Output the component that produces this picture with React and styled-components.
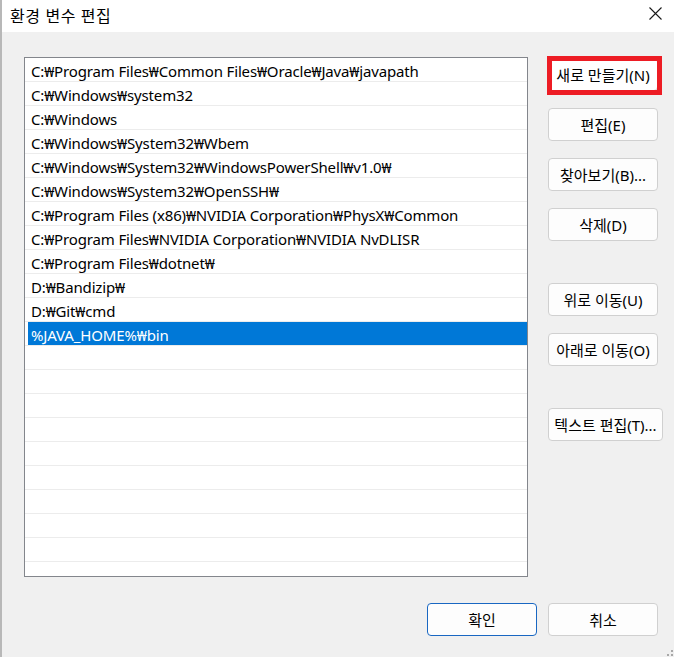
import React from "react";
import styled, {createGlobalStyle} from "styled-components";

const paths = [
    "C:₩Program Files₩Common Files₩Oracle₩Java₩javapath",
    "C:₩Windows₩system32",
    "C:₩Windows",
    "C:₩Windows₩System32₩Wbem",
    "C:₩Windows₩System32₩WindowsPowerShell₩v1.0₩",
    "C:₩Windows₩System32₩OpenSSH₩",
    "C:₩Program Files (x86)₩NVIDIA Corporation₩PhysX₩Common",
    "C:₩Program Files₩NVIDIA Corporation₩NVIDIA NvDLISR",
    "C:₩Program Files₩dotnet₩",
    "D:₩Bandizip₩",
    "D:₩Git₩cmd",
    "%JAVA_HOME%₩bin",
];

const TOTAL_ROWS = 21;
const SELECTED = 11;

const GlobalStyle = createGlobalStyle`
  html, body {
    margin: 0;
    padding: 0;
    background: #f0f0f0;
  }

  body {
    font-family: "Noto Sans", "Noto Sans CJK KR", sans-serif;
    font-size: 15px;
    color: #000;
  }
`;

export default function App() {
    const rows = Array.from({length: TOTAL_ROWS}, (_, i) => paths[i] || "");

    return <>
        <GlobalStyle/>
        <Window>
            <TitleBar>
                <Title>환경 변수 편집</Title>
                <CloseButton>
                    <svg width="13" height="13" viewBox="0 0 13 13">
                        <path d="M0.5 0.5 L12.5 12.5 M12.5 0.5 L0.5 12.5" stroke="#1a1a1a" strokeWidth="1.1"/>
                    </svg>
                </CloseButton>
            </TitleBar>

            <Body>
                <ListBox>
                    {rows.map((text, index) =>
                        <Row key={index}>
                            <RowLabel selected={index === SELECTED}>{text}</RowLabel>
                        </Row>
                    )}
                </ListBox>

                <SideColumn>
                    <Button highlighted>새로 만들기(N)</Button>
                    <Button>편집(E)</Button>
                    <Button>찾아보기(B)...</Button>
                    <Button>삭제(D)</Button>
                    <Button spaced>위로 이동(U)</Button>
                    <Button>아래로 이동(O)</Button>
                    <Button spaced wide>텍스트 편집(T)...</Button>
                </SideColumn>
            </Body>

            <Footer>
                <Button primary>확인</Button>
                <Button>취소</Button>
                <Grip>
                    <svg width="12" height="12" viewBox="0 0 12 12">
                        <rect x="9" y="1" width="2" height="2" fill="#a8a8a8"/>
                        <rect x="5" y="5" width="2" height="2" fill="#a8a8a8"/>
                        <rect x="9" y="5" width="2" height="2" fill="#a8a8a8"/>
                        <rect x="1" y="9" width="2" height="2" fill="#a8a8a8"/>
                        <rect x="5" y="9" width="2" height="2" fill="#a8a8a8"/>
                        <rect x="9" y="9" width="2" height="2" fill="#a8a8a8"/>
                    </svg>
                </Grip>
            </Footer>
        </Window>
    </>
};

const Window = styled.div`
  position: relative;
  width: 674px;
  height: 657px;
  box-sizing: border-box;
  border-left: 2px solid #b8b8b8;
  background: #f0f0f0;
  display: flex;
  flex-direction: column;
  overflow: hidden;
`;

const TitleBar = styled.div`
  height: 32px;
  background: #ffffff;
  display: flex;
  align-items: center;
  justify-content: space-between;
  padding-left: 8px;
  flex-shrink: 0;
`;

const Title = styled.span`
  font-size: 16px;
  letter-spacing: 0.6px;
  margin-top: -2px;
`;

const CloseButton = styled.div`
  width: 30px;
  height: 32px;
  display: flex;
  align-items: center;
  justify-content: center;
  margin-right: 4px;
  margin-top: -6px;
`;

const Body = styled.div`
  display: flex;
  align-items: flex-start;
  padding: 25px 0 0 22px;
  gap: 20px;
`;

const ListBox = styled.div`
  width: 504px;
  height: 520px;
  box-sizing: border-box;
  border: 1px solid #83868c;
  background: #ffffff;
  overflow: hidden;
`;

const Row = styled.div`
  height: 23px;
  border-bottom: 1px solid #ececec;
`;

const RowLabel = styled.div`
  height: 23px;
  line-height: 26px;
  overflow: hidden;
  margin-left: 3px;
  padding-left: 3px;
  white-space: nowrap;
  letter-spacing: -0.15px;
  color: ${props => props.selected ? "#ffffff" : "#000000"};
  background: ${props => props.selected ? "#0078d7" : "transparent"};
`;

const SideColumn = styled.div`
  display: flex;
  flex-direction: column;
  gap: 17px;
  padding-top: 1px;
`;

const Button = styled.div`
  position: relative;
  width: ${props => props.wide ? "115px" : "110px"};
  height: 33px;
  box-sizing: border-box;
  display: flex;
  align-items: center;
  justify-content: center;
  white-space: nowrap;
  border: 1px solid ${props => props.primary ? "#1967c2" : "#d0d0d0"};
  border-radius: 4px;
  background: ${props => props.highlighted ? "#ffffff" : "#fdfdfd"};
  margin-top: ${props => props.spaced ? "25px" : "0"};
  font-size: 15px;

  ${props => props.highlighted && `
    &::after {
      content: "";
      position: absolute;
      top: -3px;
      left: -2px;
      right: -5px;
      bottom: -5px;
      border: 5px solid #ed1c24;
    }
  `}
`;

const Footer = styled.div`
  display: flex;
  justify-content: flex-end;
  gap: 11px;
  padding: 26px 16px 0 0;
`;

const Grip = styled.div`
  position: absolute;
  right: 0;
  bottom: 0;
  width: 12px;
  height: 12px;
`;
